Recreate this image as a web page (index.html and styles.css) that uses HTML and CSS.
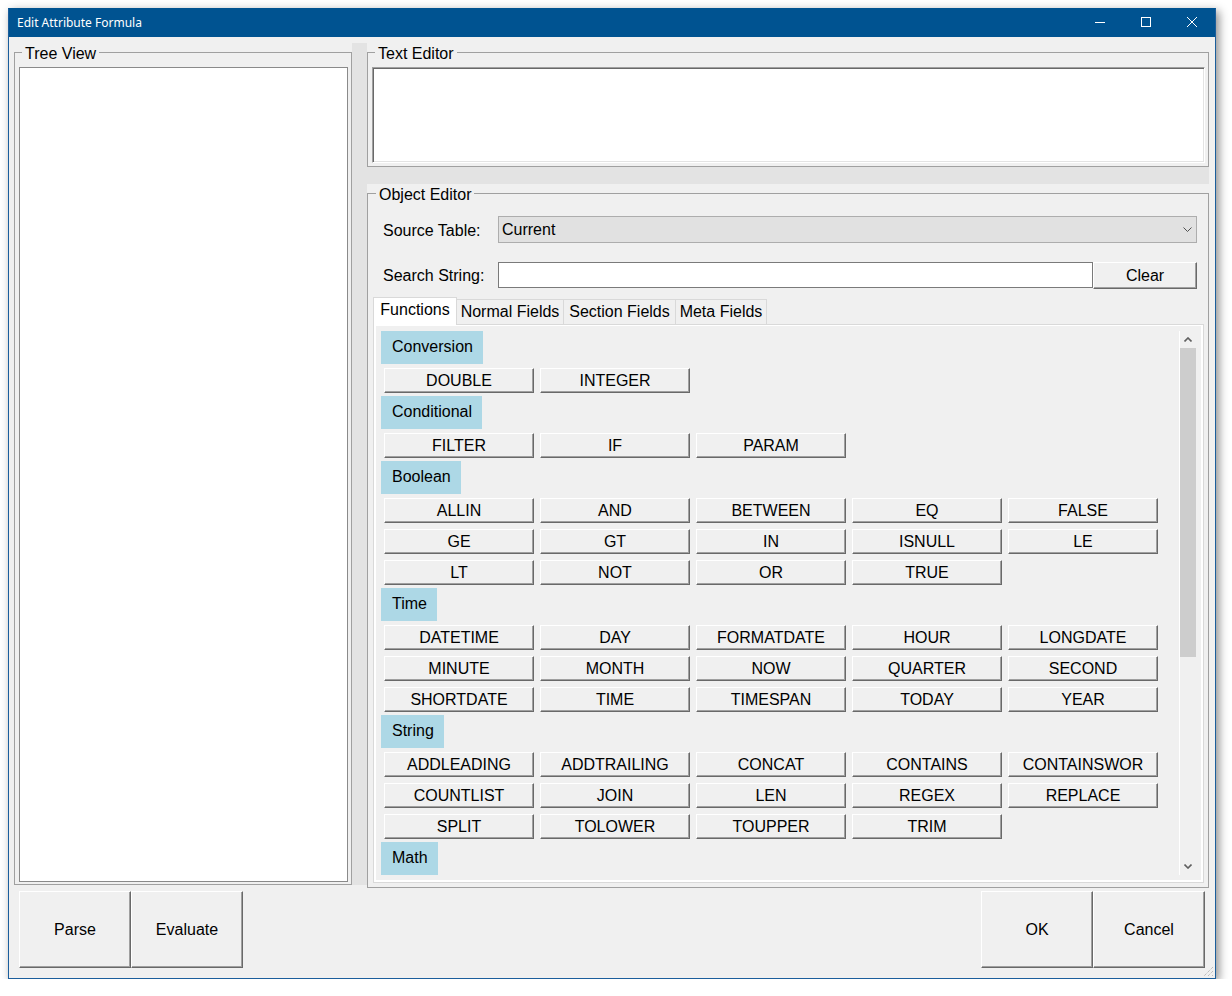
FILE: index.html
```html
<!DOCTYPE html>
<html lang="en">
<head>
<meta charset="utf-8">
<title>Edit Attribute Formula</title>
<link rel="stylesheet" href="styles.css">
</head>
<body>
<div class="window">
  <div class="titlebar">
    <span class="title">Edit Attribute Formula</span>
    <div class="caption-buttons">
      <span class="cap-btn"><svg width="10" height="10" viewBox="0 0 10 10"><line x1="0" y1="5.5" x2="10" y2="5.5" stroke="#fff" stroke-width="1"/></svg></span>
      <span class="cap-btn"><svg width="10" height="10" viewBox="0 0 10 10"><rect x="0.5" y="0.5" width="9" height="9" fill="none" stroke="#fff" stroke-width="1"/></svg></span>
      <span class="cap-btn"><svg width="10" height="10" viewBox="0 0 10 10"><path d="M0 0 L10 10 M10 0 L0 10" stroke="#fff" stroke-width="1"/></svg></span>
    </div>
  </div>
  <div class="client">
    <div class="main">
      <fieldset class="group tree-group">
        <legend>Tree View</legend>
        <div class="tree-box"></div>
      </fieldset>
      <div class="vsplit"></div>
      <div class="right-col">
        <fieldset class="group text-group">
          <legend>Text Editor</legend>
          <div class="text-box"></div>
        </fieldset>
        <div class="hsplit"></div>
        <fieldset class="group object-group">
          <legend>Object Editor</legend>
          <div class="form-row">
            <span class="form-label">Source Table:</span>
            <div class="select">
              <span>Current</span>
              <svg class="chev" width="9" height="6" viewBox="0 0 9 6"><polyline points="0.5,0.5 4.5,4.5 8.5,0.5" fill="none" stroke="#505050" stroke-width="1"/></svg>
            </div>
          </div>
          <div class="form-row search-row">
            <span class="form-label">Search String:</span>
            <div class="input"></div>
            <button class="btn clear-btn">Clear</button>
          </div>
          <div class="tabs">
            <div class="tabstrip">
              <span class="tab active t1">Functions</span>
              <span class="tab t2">Normal Fields</span>
              <span class="tab t3">Section Fields</span>
              <span class="tab t4">Meta Fields</span>
            </div>
            <div class="tabpage">
              <div class="page-inner">
                <div class="scrollpanel">
                  <div class="funcs">
                    <div class="cat">Conversion</div>
                    <div class="btns">
                      <button class="btn fbtn">DOUBLE</button>
                      <button class="btn fbtn">INTEGER</button>
                    </div>
                    <div class="cat">Conditional</div>
                    <div class="btns">
                      <button class="btn fbtn">FILTER</button>
                      <button class="btn fbtn">IF</button>
                      <button class="btn fbtn">PARAM</button>
                    </div>
                    <div class="cat">Boolean</div>
                    <div class="btns">
                      <button class="btn fbtn">ALLIN</button>
                      <button class="btn fbtn">AND</button>
                      <button class="btn fbtn">BETWEEN</button>
                      <button class="btn fbtn">EQ</button>
                      <button class="btn fbtn">FALSE</button>
                      <button class="btn fbtn">GE</button>
                      <button class="btn fbtn">GT</button>
                      <button class="btn fbtn">IN</button>
                      <button class="btn fbtn">ISNULL</button>
                      <button class="btn fbtn">LE</button>
                      <button class="btn fbtn">LT</button>
                      <button class="btn fbtn">NOT</button>
                      <button class="btn fbtn">OR</button>
                      <button class="btn fbtn">TRUE</button>
                    </div>
                    <div class="cat">Time</div>
                    <div class="btns">
                      <button class="btn fbtn">DATETIME</button>
                      <button class="btn fbtn">DAY</button>
                      <button class="btn fbtn">FORMATDATE</button>
                      <button class="btn fbtn">HOUR</button>
                      <button class="btn fbtn">LONGDATE</button>
                      <button class="btn fbtn">MINUTE</button>
                      <button class="btn fbtn">MONTH</button>
                      <button class="btn fbtn">NOW</button>
                      <button class="btn fbtn">QUARTER</button>
                      <button class="btn fbtn">SECOND</button>
                      <button class="btn fbtn">SHORTDATE</button>
                      <button class="btn fbtn">TIME</button>
                      <button class="btn fbtn">TIMESPAN</button>
                      <button class="btn fbtn">TODAY</button>
                      <button class="btn fbtn">YEAR</button>
                    </div>
                    <div class="cat">String</div>
                    <div class="btns">
                      <button class="btn fbtn">ADDLEADING</button>
                      <button class="btn fbtn">ADDTRAILING</button>
                      <button class="btn fbtn">CONCAT</button>
                      <button class="btn fbtn">CONTAINS</button>
                      <button class="btn fbtn">CONTAINSWOR</button>
                      <button class="btn fbtn">COUNTLIST</button>
                      <button class="btn fbtn">JOIN</button>
                      <button class="btn fbtn">LEN</button>
                      <button class="btn fbtn">REGEX</button>
                      <button class="btn fbtn">REPLACE</button>
                      <button class="btn fbtn">SPLIT</button>
                      <button class="btn fbtn">TOLOWER</button>
                      <button class="btn fbtn">TOUPPER</button>
                      <button class="btn fbtn">TRIM</button>
                    </div>
                    <div class="cat">Math</div>
                  </div>
                  <div class="vscroll">
                    <div class="sb-arrow"><svg width="8" height="5" viewBox="0 0 8 5"><polyline points="0.5,4.5 4,1 7.5,4.5" fill="none" stroke="#606060" stroke-width="1.6"/></svg></div>
                    <div class="sb-thumb"></div>
                    <div class="sb-track"></div>
                    <div class="sb-arrow"><svg width="8" height="5" viewBox="0 0 8 5"><polyline points="0.5,0.5 4,4 7.5,0.5" fill="none" stroke="#606060" stroke-width="1.6"/></svg></div>
                  </div>
                </div>
              </div>
            </div>
          </div>
        </fieldset>
      </div>
    </div>
    <div class="bottombar">
      <button class="btn big">Parse</button>
      <button class="btn big">Evaluate</button>
      <div class="spacer"></div>
      <button class="btn big">OK</button>
      <button class="btn big">Cancel</button>
    </div>
    <svg class="grip" width="12" height="12" viewBox="0 0 12 12">
      <path d="M11 2 L2 11 M11 6 L6 11 M11 10 L10 11" stroke="#a8a8a8" stroke-width="1" stroke-dasharray="1 1"/>
    </svg>
  </div>
</div>
</body>
</html>
```

FILE: styles.css
```css
html, body {
  margin: 0;
  padding: 0;
  background: #ffffff;
}

body {
  font-family: "Liberation Sans", Arial, sans-serif;
  font-size: 16px;
  color: #000;
}

.window {
  margin: 8px 0 0 8px;
  width: 1208px;
  height: 971px;
  box-sizing: border-box;
  border: 1px solid #1b5e9c;
  border-top-color: #005391;
  box-shadow: 3px 3px 9px rgba(0, 0, 0, 0.45);
  background: #f0f0f0;
  display: flex;
  flex-direction: column;
}

.titlebar {
  flex: none;
  height: 28px;
  background: #005391;
  display: flex;
  align-items: center;
}

.title {
  flex: 1;
  font-family: "Noto Sans", "Segoe UI", sans-serif;
  font-size: 12px;
  color: #fff;
  padding-left: 8px;
  padding-bottom: 2px;
}

.caption-buttons {
  display: flex;
  height: 100%;
}

.cap-btn {
  width: 46px;
  display: flex;
  align-items: center;
  justify-content: center;
  padding-bottom: 2px;
  box-sizing: border-box;
}

.cap-btn svg {
  display: block;
}

.client {
  flex: 1;
  position: relative;
  display: flex;
  flex-direction: column;
}

.main {
  display: flex;
  height: 842px;
  margin-top: 6px;
  padding-left: 5px;
}

fieldset.group {
  margin: 0;
  border: 1px solid #a0a0a0;
  min-width: 0;
  box-sizing: border-box;
  display: flex;
  flex-direction: column;
}

fieldset.group legend {
  font-size: 16px;
  height: 18px;
  line-height: 22px;
  padding: 0 3px;
  margin-left: 3px;
}

.tree-group {
  width: 338px;
  padding: 6px 3px 2px 4px;
}

.tree-box {
  flex: 1;
  background: #fff;
  border: 1px solid #8a8a8a;
}

.vsplit {
  width: 15px;
  background: #e3e3e3;
}

.right-col {
  width: 842px;
  display: flex;
  flex-direction: column;
}

.text-group {
  height: 124px;
  flex: none;
  padding: 6px 3px 3px 4px;
}

.text-box {
  height: 96px;
  box-sizing: border-box;
  background: #fff;
  border-top: 1px solid #a0a0a0;
  border-left: 1px solid #a0a0a0;
  border-right: 1px solid #fff;
  border-bottom: 1px solid #fff;
  box-shadow: inset 1px 1px 0 #696969, inset -1px -1px 0 #e3e3e3;
}

.hsplit {
  height: 17px;
  flex: none;
  background: #e3e3e3;
}

.object-group {
  flex: 1;
  padding: 14px 4px 4px 5px;
}

.object-group legend {
  margin-left: 2px;
}

.form-row {
  display: flex;
  align-items: center;
  height: 27px;
  padding: 0 7px 0 10px;
}

.form-row .form-label {
  padding-top: 2px;
}

.search-row {
  margin-top: 19px;
  align-items: flex-start;
}

.search-row .form-label {
  align-self: center;
  padding-top: 0;
}

.form-label {
  width: 115px;
  flex: none;
}

.select {
  flex: 1;
  height: 27px;
  box-sizing: border-box;
  background: #e1e1e1;
  border: 1px solid #adadad;
  display: flex;
  align-items: center;
  padding: 1px 4px 0 3px;
}

.select .chev {
  margin-left: auto;
  display: block;
}

.input {
  flex: 1;
  height: 26px;
  box-sizing: border-box;
  background: #fff;
  border: 1px solid #7a7a7a;
}

.btn {
  font-family: "Liberation Sans", Arial, sans-serif;
  font-size: 16px;
  color: #000;
  background: #f0f0f0;
  margin: 0;
  padding: 0;
  box-sizing: border-box;
  border-style: solid;
  border-width: 1px;
  border-color: #ffffff #696969 #696969 #ffffff;
  box-shadow: inset -1px -1px 0 #a0a0a0;
  text-align: center;
  white-space: nowrap;
  overflow: hidden;
}

.clear-btn {
  width: 104px;
  height: 27px;
}

.tabs {
  flex: 1;
  margin-top: 8px;
  display: flex;
  flex-direction: column;
}

.tabstrip {
  display: flex;
  align-items: flex-end;
  height: 27px;
  flex: none;
}

.tab {
  height: 25px;
  line-height: 24px;
  box-sizing: border-box;
  border: 1px solid #d9d9d9;
  border-bottom: none;
  margin-left: -1px;
  background: #f0f0f0;
  text-align: center;
  white-space: nowrap;
}

.tab.active {
  height: 28px;
  margin-bottom: -1px;
  margin-left: 0;
  background: #fff;
  position: relative;
  z-index: 1;
}

.t1 { width: 84px; }
.t2 { width: 108px; }
.t3 { width: 113px; }
.t4 { width: 92px; }

.tabpage {
  flex: 1;
  border: 1px solid #d9d9d9;
  background: #fff;
  padding: 1px 2px 2px 2px;
  display: flex;
}

.page-inner {
  flex: 1;
  background: #f0f0f0;
  padding: 5px 5px 5px 3px;
  display: flex;
}

.scrollpanel {
  flex: 1;
  display: flex;
  overflow: hidden;
}

.funcs {
  flex: 1;
  padding-left: 2px;
  overflow: hidden;
}

.cat {
  width: fit-content;
  height: 33px;
  line-height: 31px;
  padding: 0 10px 0 11px;
  background: #add8e6;
}

.btns {
  display: grid;
  grid-template-columns: repeat(5, 150px);
  gap: 6px;
  margin: 4px 0 3px 3px;
}

.fbtn {
  height: 25px;
  width: 150px;
  line-height: 22px;
}

.vscroll {
  width: 16px;
  border-left: 1px solid #fff;
  display: flex;
  flex-direction: column;
  background: #f0f0f0;
}

.sb-arrow {
  height: 17px;
  flex: none;
  display: flex;
  align-items: center;
  justify-content: center;
}

.sb-arrow svg {
  display: block;
}

.sb-thumb {
  height: 309px;
  flex: none;
  background: #cdcdcd;
}

.sb-track {
  flex: 1;
}

.bottombar {
  flex: 1;
  display: flex;
  padding: 6px 10px 10px 10px;
}

.big {
  width: 112px;
  height: 77px;
}

.spacer {
  flex: 1;
}

.grip {
  position: absolute;
  right: 1px;
  bottom: 1px;
  display: block;
}
```
